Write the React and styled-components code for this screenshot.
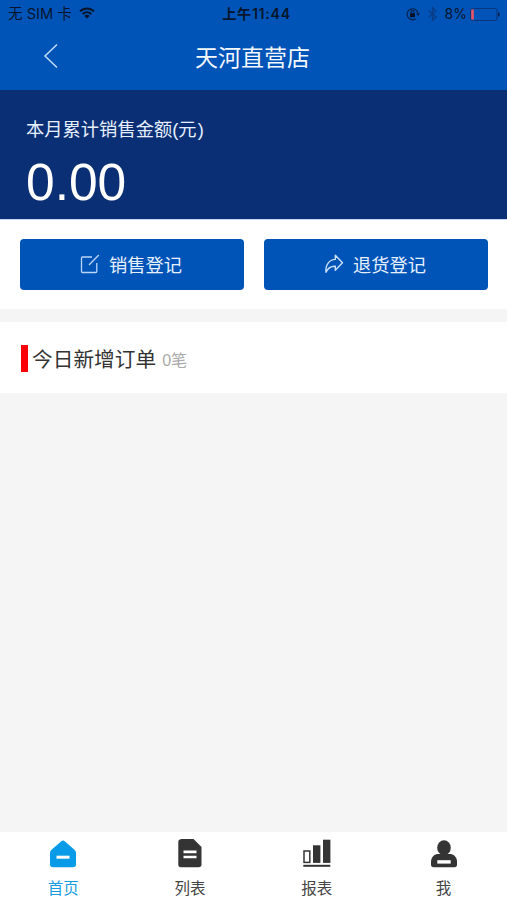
import React from 'react'
import styled, { createGlobalStyle } from 'styled-components'

const tabs = [
  { key: 'home', label: '首页', icon: HomeIcon },
  { key: 'list', label: '列表', icon: ListIcon },
  { key: 'report', label: '报表', icon: ReportIcon },
  { key: 'me', label: '我', icon: MeIcon },
]

export default function App() {
  return (
    <>
      <GlobalStyle />
      <Page>
        <StatusBar>
          <Carrier>
            <span>无 SIM 卡</span>
            <WifiIcon />
          </Carrier>
          <Clock>上午11:44</Clock>
          <StatusRight>
            <LockIcon />
            <BluetoothIcon />
            <span>8%</span>
            <BatteryIcon />
          </StatusRight>
        </StatusBar>

        <NavBar>
          <BackButton aria-label="back">
            <svg width="16" height="26" viewBox="0 0 16 26" fill="none" stroke="#c3dcfb" strokeWidth="1.5">
              <path d="M14 1.5 L2 13 L14 24.5" />
            </svg>
          </BackButton>
          <Title>天河直营店</Title>
        </NavBar>

        <Summary>
          <SummaryLabel>本月累计销售金额(元<i>)</i></SummaryLabel>
          <Amount>0.00</Amount>
        </Summary>

        <Actions>
          <ActionButton><EditIcon />销售登记</ActionButton>
          <ActionButton><ReturnIcon />退货登记</ActionButton>
        </Actions>

        <Orders>
          <Marker />
          <OrdersTitle>今日新增订单</OrdersTitle>
          <OrdersCount>0笔</OrdersCount>
        </Orders>

        <TabBar>
          {tabs.map(({ key, label, icon: Icon }) => (
            <Tab key={key} $active={key === 'home'}>
              <Icon />
              <span>{label}</span>
            </Tab>
          ))}
        </TabBar>
      </Page>
    </>
  )
}

function WifiIcon() {
  return (
    <svg width="16" height="12" viewBox="0 0 16 12" fill="none" stroke="#06152c" strokeWidth="2">
      <path d="M1 4.4 C5 0.4 11 0.4 15 4.4" />
      <path d="M3.6 7.1 C6.2 4.6 9.8 4.6 12.4 7.1" />
      <path d="M8 11.6 L5.3 8.9 C6.8 7.5 9.2 7.5 10.7 8.9 Z" fill="#06152c" stroke="none" />
    </svg>
  )
}

function LockIcon() {
  return (
    <svg width="14" height="14" viewBox="0 0 14 14" fill="none" stroke="#06204a" strokeWidth="1.2">
      <path d="M10.2 11.4 A5.5 5.5 0 1 1 12 6.5" />
      <path d="M10 6.2 H14 L12.1 9 Z" fill="#06204a" stroke="none" />
      <rect x="4" y="6.2" width="5" height="4" fill="#03112a" stroke="none" />
      <path d="M5 6.5 V5.2 A1.5 1.5 0 0 1 8 5.2 V6.5" />
    </svg>
  )
}

function BluetoothIcon() {
  return (
    <svg width="9" height="14" viewBox="0 0 9 14" fill="none" stroke="#0a3c85" strokeWidth="1.3">
      <path d="M0.8 3.8 L8 10 L4.5 13.2 V0.8 L8 4 L0.8 10.2" />
    </svg>
  )
}

function BatteryIcon() {
  return (
    <svg width="30" height="13" viewBox="0 0 30 13">
      <rect x="0.5" y="0.5" width="26.5" height="12" rx="2" fill="none" stroke="#06357c" />
      <rect x="1.2" y="1.5" width="2.6" height="10" fill="#ee5365" />
      <path d="M28 4.3 C30.2 5 30.2 8 28 8.7 Z" fill="#041b40" />
    </svg>
  )
}

function EditIcon() {
  return (
    <svg width="20" height="20" viewBox="0 0 20 20" fill="none" stroke="#b9d6f8" strokeWidth="1.3">
      <path d="M12 3 H2.5 Q1.5 3 1.5 4 V17.5 Q1.5 18.5 2.5 18.5 H15.8 Q16.8 18.5 16.8 17.5 V9" />
      <path d="M9 11 L18.8 1" />
    </svg>
  )
}

function ReturnIcon() {
  return (
    <svg width="20" height="20" viewBox="0 0 20 20" fill="none" stroke="#c9e0fb" strokeWidth="1.4" strokeLinejoin="round">
      <path d="M11.3 1.2 L18.5 8.8 L11.3 16.2 V12.3 C7 12.1 4 13.8 2 18.3 C1.2 11.3 5 5.6 11.3 5.4 Z" />
    </svg>
  )
}

function HomeIcon() {
  return (
    <svg width="28" height="29" viewBox="0 0 28 29">
      <path d="M12 1.4 Q14 -0.2 16 1.4 L25.5 9.8 Q27 11 27 13 V24.5 Q27 27.3 24 27.3 H4 Q1 27.3 1 24.5 V13 Q1 11 2.5 9.8 Z" fill="#0a9be8" />
      <rect x="7.5" y="15.7" width="13" height="3" fill="#fff" />
    </svg>
  )
}

function ListIcon() {
  return (
    <svg width="28" height="29" viewBox="0 0 28 29">
      <path d="M5 -1 H17.5 L25.5 7 V24.5 Q25.5 27.3 22.5 27.3 H5 Q2.3 27.3 2.3 24.5 V2 Q2.3 -0.8 5 -0.8 Z" fill="#343434" />
      <path d="M7.5 11.8 H20.5 M7.5 17 H20.5" stroke="#fff" strokeWidth="2.7" />
    </svg>
  )
}

function ReportIcon() {
  return (
    <svg width="28" height="29" viewBox="0 0 28 29" fill="#343434">
      <rect x="1" y="11" width="5.8" height="11.4" fill="none" stroke="#343434" strokeWidth="1.5" />
      <rect x="10" y="5.3" width="7.4" height="17.6" />
      <rect x="20" y="-0.3" width="7.4" height="23.2" />
      <rect x="0.3" y="24.8" width="27" height="2" />
    </svg>
  )
}

function MeIcon() {
  return (
    <svg width="28" height="29" viewBox="0 0 28 29" fill="#343434">
      <ellipse cx="14" cy="7.7" rx="6.8" ry="7.4" />
      <path d="M7 14 H21 C25 15 27 18 27 22 V24.5 Q27 27.3 24.5 27.3 H3.5 Q1 27.3 1 24.5 V22 C1 18 3 15 7 14 Z" />
      <rect x="7.3" y="20.2" width="13.4" height="3.4" fill="#fff" />
    </svg>
  )
}

const GlobalStyle = createGlobalStyle`
  * {
    box-sizing: border-box;
  }

  body {
    margin: 0;
    background: #f5f5f5;
    font-family: "Liberation Sans", "Noto Sans CJK SC", sans-serif;
  }

  svg {
    display: block;
    flex: none;
    overflow: visible;
  }
`

const Page = styled.div`
  display: flex;
  flex-direction: column;
  height: 900px;
  overflow: hidden;
`

const StatusBar = styled.div`
  display: grid;
  grid-template-columns: 1fr auto 1fr;
  align-items: center;
  height: 28px;
  padding: 0 7px 0 8px;
  background: #0054b7;
  color: #06152c;
  font-family: Inter, "Noto Sans CJK SC", sans-serif;
  font-size: 14.6px;
  line-height: 28px;
  white-space: nowrap;
`

const Carrier = styled.div`
  display: flex;
  align-items: center;
  gap: 7px;

  svg {
    margin-top: -2px;
  }
`

const Clock = styled.div`
  margin-left: 5px;
  font-size: 14.2px;
  font-weight: 600;
  letter-spacing: 0.7px;
`

const StatusRight = styled.div`
  display: flex;
  align-items: center;
  justify-content: flex-end;
  font-size: 14px;

  span {
    margin: 0 3px 0 8px;
  }

  svg + svg {
    margin-left: 8px;
  }
`

const NavBar = styled.div`
  display: grid;
  grid-template-columns: 80px 1fr 80px;
  align-items: center;
  height: 62px;
  padding-bottom: 6px;
  background: #0054b7;
`

const BackButton = styled.button`
  padding: 0 0 0 43px;
  border: 0;
  background: none;
`

const Title = styled.div`
  padding-right: 2px;
  color: #f4f9ff;
  font-size: 23px;
  text-align: center;
`

const Summary = styled.div`
  height: 130px;
  padding: 26px 26px 0;
  background: #0b2f74;
  border-bottom: 1px solid #c8d8f5;
  color: #fff;
`

const SummaryLabel = styled.div`
  color: #e6efff;
  font-size: 18.3px;
  line-height: 28px;

  i {
    margin-left: 1px;
    font-style: normal;
  }
`

const Amount = styled.div`
  margin-top: 9px;
  font-size: 51.5px;
  line-height: 58px;
`

const Actions = styled.div`
  display: flex;
  gap: 20px;
  height: 89px;
  padding: 19px 19px 19px 20px;
  background: #fff;
`

const ActionButton = styled.button`
  flex: 1;
  display: flex;
  align-items: center;
  justify-content: center;
  gap: 9px;
  height: 51px;
  padding: 0 2px 1px 0;
  border: 0;
  border-radius: 4px;
  background: #0054b7;
  color: #e6f1ff;
  font-family: inherit;
  font-size: 18.3px;
`

const Orders = styled.div`
  display: flex;
  align-items: center;
  height: 71px;
  margin-top: 13px;
  padding-left: 21px;
  background: #fff;
`

const Marker = styled.div`
  width: 7px;
  height: 27px;
  margin: 1px 4px 0 0;
  background: #fb0007;
`

const OrdersTitle = styled.div`
  color: #333;
  font-size: 20.7px;
`

const OrdersCount = styled.div`
  margin: 3px 0 0 6px;
  color: #aaa;
  font-size: 16px;
`

const TabBar = styled.div`
  display: flex;
  height: 68px;
  margin-top: auto;
  background: #fff;
`

const Tab = styled.div`
  flex: 1;
  display: flex;
  flex-direction: column;
  align-items: center;
  padding-top: 8px;
  color: ${(props) => (props.$active ? '#1a9de0' : '#444')};

  span {
    margin-top: 9px;
    font-size: 15.5px;
    line-height: 22px;
  }
`
